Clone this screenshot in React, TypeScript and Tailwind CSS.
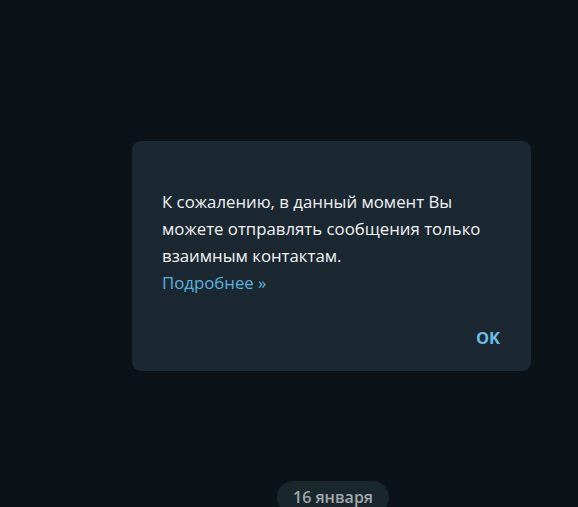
export default function App() {
  return (
    <div
      className="w-[578px] h-[507px] bg-[#0b1319] relative overflow-hidden flex flex-col"
      style={{ fontFamily: '"Open Sans", "Noto Sans", sans-serif' }}
    >
      <div className="h-[141px] shrink-0" />
      <div className="ml-[132px] w-[399px] h-[230px] shrink-0 rounded-[9px] bg-[#1c2831] flex flex-col">
        <div className="pt-[47px] pl-[30px] pr-[28px] text-[16.8px] leading-[27px] text-[#f0f2f3]">
          <div>К сожалению, в данный момент Вы можете отправлять сообщения только взаимным контактам.</div>
          <div className="text-[#5bb1db]">Подробнее »</div>
        </div>
        <div className="flex justify-end pr-[31px] mt-[32px]">
          <span className="text-[16.5px] font-bold text-[#68bce6] leading-[20px]">OK</span>
        </div>
      </div>
      <div className="flex-1" />
      <div className="flex justify-center pl-[88px] shrink-0">
        <div className="mb-[-6px] h-[32px] px-[16px] rounded-full bg-[#1a272d] text-[#a0a8ac] text-[16px] font-semibold leading-[32px]">
          16 января
        </div>
      </div>
    </div>
  );
}
